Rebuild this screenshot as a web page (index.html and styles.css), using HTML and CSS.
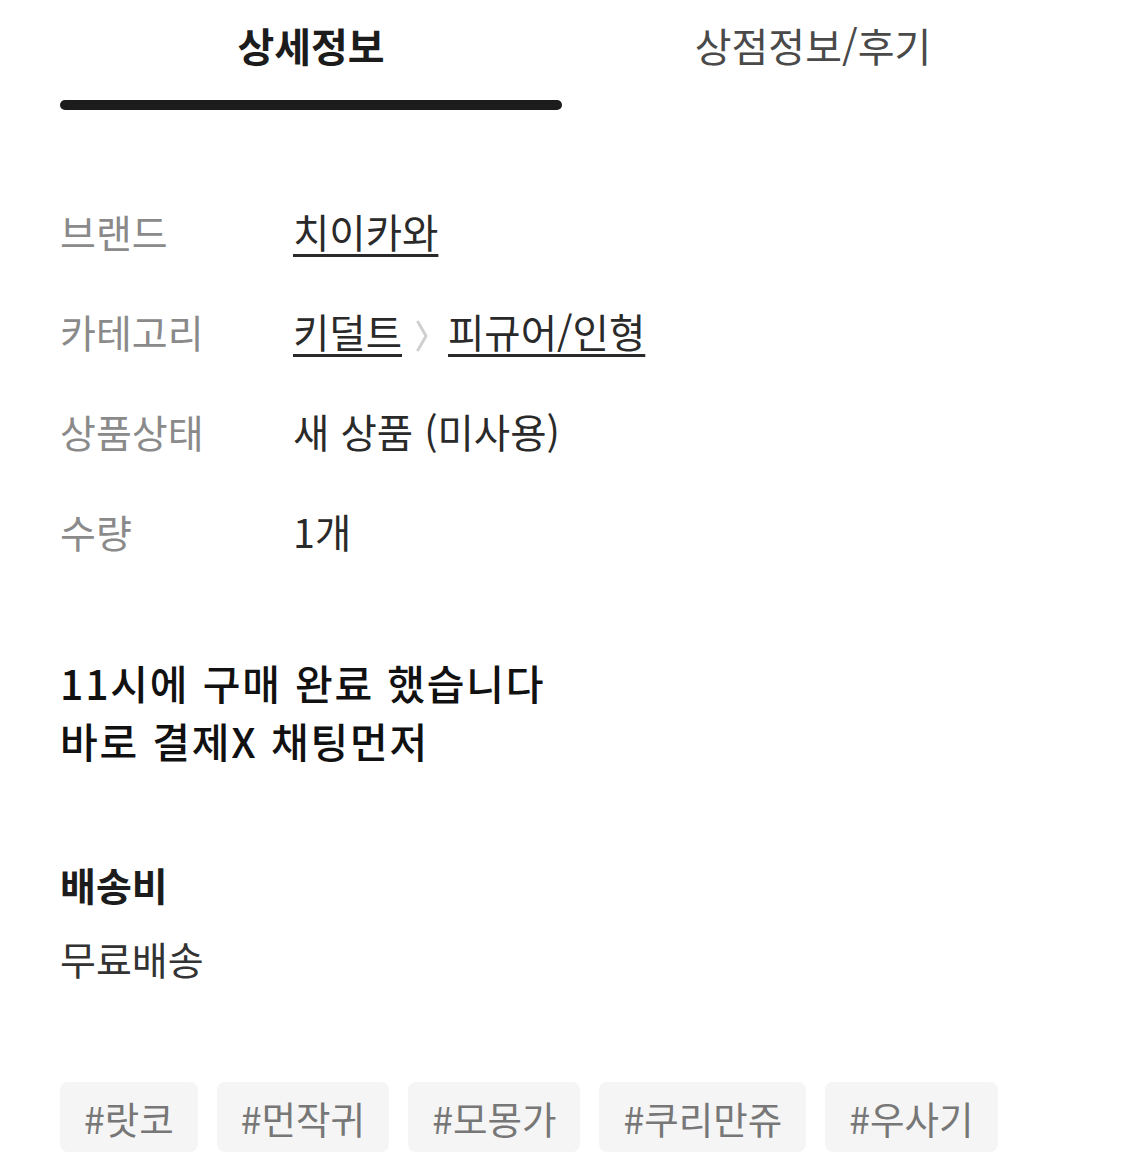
FILE: index.html
```html
<!DOCTYPE html>
<html lang="ko">
<head>
<meta charset="utf-8">
<link rel="stylesheet" href="styles.css">
</head>
<body>
<div class="page">
  <nav class="tabs">
    <div class="tab active">상세정보</div>
    <div class="tab">상점정보/후기</div>
  </nav>

  <dl class="specs">
    <div class="row"><dt>브랜드</dt><dd><a class="link">치이카와</a></dd></div>
    <div class="row"><dt>카테고리</dt><dd><a class="link">키덜트</a><svg class="chev" viewBox="0 0 16 32" width="16" height="32"><path d="M4 2 L12 16 L4 30" fill="none" stroke="#d0d0d0" stroke-width="3" stroke-linejoin="round" stroke-linecap="round"/></svg><a class="link">피규어/인형</a></dd></div>
    <div class="row"><dt>상품상태</dt><dd>새 상품 (미사용)</dd></div>
    <div class="row"><dt>수량</dt><dd>1개</dd></div>
  </dl>

  <p class="desc">11시에 구매 완료 했습니다<br>바로 결제X 채팅먼저</p>

  <section class="shipping">
    <h3 class="ship-title">배송비</h3>
    <p class="ship-value">무료배송</p>
  </section>

  <ul class="tags">
    <li class="tag">#랏코</li>
    <li class="tag">#먼작귀</li>
    <li class="tag">#모몽가</li>
    <li class="tag">#쿠리만쥬</li>
    <li class="tag">#우사기</li>
  </ul>
</div>
</body>
</html>
```

FILE: styles.css
```css
* { box-sizing: border-box; }
html, body { margin: 0; padding: 0; background: #fff; }
body {
  font-family: "Noto Sans CJK KR", "Noto Sans", sans-serif;
  color: #222;
}
.page {
  padding: 0 60px;
  width: 1125px;
}
.tabs {
  display: grid;
  grid-template-columns: 502px 502px;
}
.tab {
  text-align: center;
  font-size: 40px;
  line-height: 50px;
  padding-top: 20px;
  height: 110px;
  color: #4a4a4a;
  position: relative;
}
.tab.active {
  font-weight: 700;
  color: #1c1c1c;
}
.tab.active::after {
  content: "";
  position: absolute;
  left: 0; right: 0; bottom: 0;
  height: 10px;
  border-radius: 5px;
  background: #1c1c1c;
}
.specs {
  margin: 71px 0 0;
  padding: 0;
}
.row {
  display: flex;
  align-items: center;
  height: 100px;
}
.row dt {
  width: 233px;
  font-size: 39px;
  line-height: 50px;
  color: #8a8a8a;
  margin: 0;
}
.row dd {
  margin: 0;
  font-size: 39.5px;
  line-height: 50px;
  color: #2a2a2a;
  display: flex;
  align-items: center;
}
.link {
  color: #2a2a2a;
  text-decoration: underline;
  text-decoration-thickness: 3px;
  text-underline-offset: 6px;
}
.chev {
  margin: 10px 18px 0 12px;
}
.desc {
  margin: 72px 0 0;
  font-size: 41px;
  letter-spacing: 1.8px;
  line-height: 58px;
  font-weight: 500;
  color: #111;
}
.shipping {
  margin-top: 90px;
}
.ship-title {
  margin: 0;
  font-size: 39px;
  font-weight: 700;
  line-height: 50px;
  color: #1c1c1c;
}
.ship-value {
  margin: 24px 0 0;
  font-size: 39px;
  line-height: 50px;
  color: #333;
}
.tags {
  list-style: none;
  margin: 99px 0 0;
  padding: 0;
  display: flex;
  gap: 19px;
}
.tag {
  background: #f5f5f5;
  border-radius: 8px;
  height: 70px;
  padding: 0 24px;
  display: flex;
  align-items: center;
  font-size: 37.5px;
  color: #777;
}
```
